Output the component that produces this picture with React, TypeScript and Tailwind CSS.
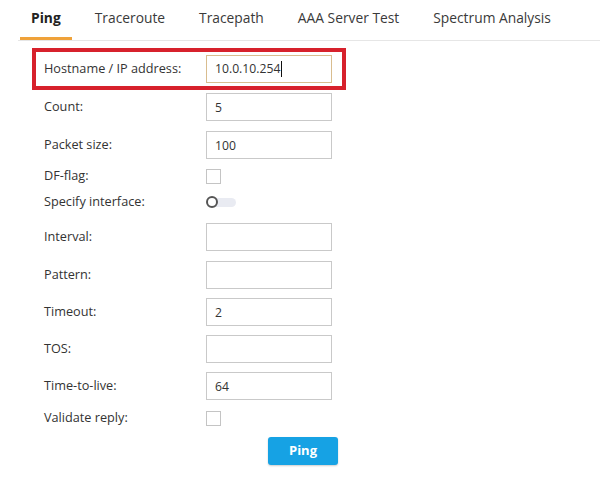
import { useState } from 'react';

const tabs = ['Ping', 'Traceroute', 'Tracepath', 'AAA Server Test', 'Spectrum Analysis'];

function Field({ label, value, className }: { label: string; value?: string; className: string }) {
  return (
    <div className={`flex h-[28px] items-center pl-[12px] ${className}`}>
      <span className="w-[162px] text-[12.7px] text-[#333]">{label}</span>
      <input
        readOnly
        defaultValue={value}
        className="box-border h-[28px] w-[126px] border border-[#c9c9c9] bg-white pl-[8px] text-[12.2px] text-[#333] outline-none"
      />
    </div>
  );
}

function CheckRow({ label, className }: { label: string; className: string }) {
  return (
    <div className={`flex h-[20px] items-center pl-[12px] ${className}`}>
      <span className="w-[162px] text-[12.7px] text-[#333]">{label}</span>
      <span className="box-border block h-[15px] w-[15px] border border-[#c4c4c4] bg-white" />
    </div>
  );
}

export default function App() {
  const [active, setActive] = useState(0);

  return (
    <div className="h-[477px] w-[600px] bg-white font-['Open_Sans',sans-serif]">
      <div className="ml-[18px] flex gap-[12px] border-b border-[#e6e6e6] pl-[2px]">
        {tabs.map((t, i) => (
          <div
            key={t}
            onClick={() => setActive(i)}
            className={`flex h-[40px] cursor-pointer items-center px-[11px] text-[13.8px] ${
              i === active
                ? 'border-b-[3px] border-[#efa23a] font-bold text-[#222]'
                : 'border-b-[3px] border-transparent text-[#3a3a3a]'
            }`}
          >
            {t}
          </div>
        ))}
      </div>

      <div className="ml-[32px] w-[314px]">
        <div className="mt-[7px] box-border flex h-[42px] items-center border-[4px] border-[#d7212c] pl-[8px]">
          <span className="w-[162px] text-[12.7px] text-[#333]">Hostname / IP address:</span>
          <div className="box-border flex h-[28px] w-[126px] items-center border border-[#d9bd8f] bg-white pl-[8px] text-[12.2px] text-[#333]">
            10.0.10.254
            <span className="ml-[1px] inline-block h-[16px] w-[1px] bg-[#111]" />
          </div>
        </div>

        <Field label="Count:" value="5" className="mt-[3px]" />
        <Field label="Packet size:" value="100" className="mt-[10px]" />
        <CheckRow label="DF-flag:" className="mt-[7px]" />

        <div className="mt-[6px] flex h-[20px] items-center pl-[12px]">
          <span className="w-[162px] text-[12.7px] text-[#333]">Specify interface:</span>
          <span className="relative flex h-[12px] w-[30px] items-center">
            <span className="ml-[4px] h-[9px] w-[26px] rounded-full bg-[#e9ebf2]" />
            <span className="absolute left-0 top-0 box-border h-[12px] w-[12px] rounded-full border-2 border-[#555] bg-white" />
          </span>
        </div>

        <Field label="Interval:" className="mt-[11px]" />
        <Field label="Pattern:" className="mt-[10px]" />
        <Field label="Timeout:" value="2" className="mt-[9px]" />
        <Field label="TOS:" className="mt-[9px]" />
        <Field label="Time-to-live:" value="64" className="mt-[9px]" />
        <CheckRow label="Validate reply:" className="mt-[8px]" />

        <div className="mt-[9px] flex pl-[236px]">
          <button className="h-[28px] w-[70px] rounded-[3px] bg-[#16a2e4] text-[13px] font-bold text-white shadow-[0_1px_2px_rgba(0,0,0,0.2)]">
            Ping
          </button>
        </div>
      </div>
    </div>
  );
}
